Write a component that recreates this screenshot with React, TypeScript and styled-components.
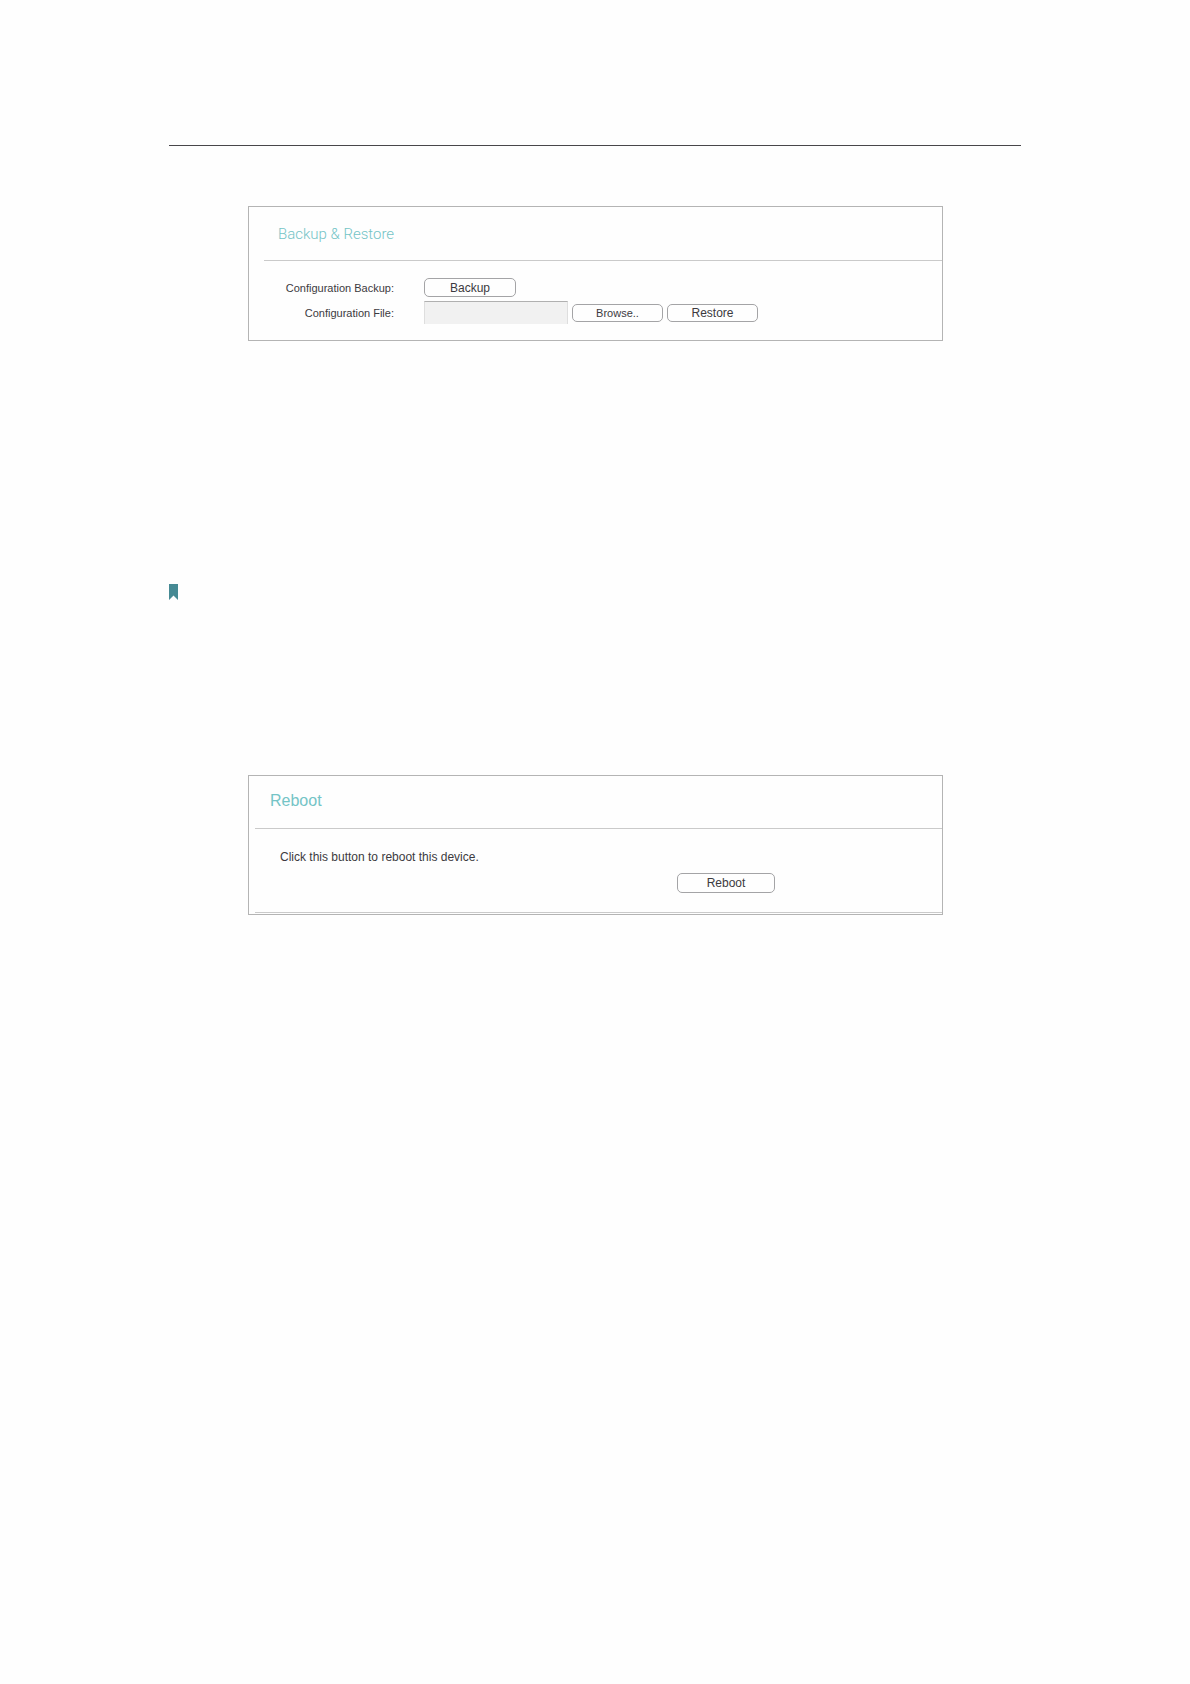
import React from "react";
import styled, { createGlobalStyle } from "styled-components";

const GlobalStyle = createGlobalStyle`
  *, *::before, *::after { box-sizing: border-box; }
  body {
    margin: 0;
    background: #fefefe;
    color: #3c3a40;
    font-family: "Liberation Sans", Arial, sans-serif;
  }
`;

const Page = styled.main`
  max-width: 1190px;
  margin: 0 auto;
  padding: 145px 169px 0;
`;

const TopRule = styled.hr`
  margin: 0 0 60px;
  border: 0;
  border-top: 1px solid #48464a;
`;

const Panel = styled.section<{ $inset: number }>`
  margin: 0 78px 0 79px;
  padding-left: ${({ $inset }) => $inset}px;
  border: 1px solid #b4b4b4;
`;

const PanelTitle = styled.h2<{ $indent: number; $height: number; $narrow?: boolean }>`
  margin: 0;
  padding-left: ${({ $indent }) => $indent}px;
  height: ${({ $height }) => $height}px;
  border-bottom: 1px solid #cacaca;
  color: #74c4c6;
  font-family: ${({ $narrow }) => ($narrow ? 'Roboto, "Liberation Sans"' : '"Liberation Sans"')}, sans-serif;
  font-size: ${({ $narrow }) => ($narrow ? 15 : 16)}px;
  font-weight: ${({ $narrow }) => ($narrow ? 300 : 400)};
  line-height: ${({ $narrow }) => ($narrow ? 54 : 50)}px;
`;

const Form = styled.form`
  display: grid;
  grid-template-columns: 130px 1fr;
  column-gap: 30px;
  row-gap: 4px;
  padding: 17px 0 16px;
`;

const FieldLabel = styled.label`
  align-self: center;
  text-align: right;
  font-size: 11px;
  line-height: 16px;
`;

const Controls = styled.div`
  display: flex;
  align-items: center;
  gap: 4px;
`;

const Button = styled.button<{ $width: number; $height: number; $size?: number }>`
  width: ${({ $width }) => $width}px;
  height: ${({ $height }) => $height}px;
  padding: 0;
  border: 1px solid #a4a4a6;
  border-radius: 5px;
  background: #fefefe;
  color: inherit;
  font-family: inherit;
  font-size: ${({ $size = 12 }) => $size}px;
  line-height: 16px;
`;

const FileInput = styled.input`
  width: 144px;
  height: 23px;
  padding: 0 4px;
  border: 0;
  border-top: 1px solid #b0b0b0;
  border-left: 1px solid #dedede;
  border-right: 1px solid #dedede;
  border-radius: 0;
  background: #f1f1f1;
  font: inherit;
`;

const BookmarkRow = styled.div`
  display: flex;
  padding: 243px 0 175px;
`;

const RebootBody = styled.div`
  display: flex;
  flex-direction: column;
  padding-top: 20px;
`;

const Message = styled.p`
  margin: 0;
  padding-left: 25px;
  font-size: 12px;
  line-height: 16px;
`;

const RebootAction = styled.div`
  display: flex;
  justify-content: flex-end;
  padding: 8px 167px 19px 0;
`;

const BottomRule = styled.hr`
  width: 100%;
  margin: 0 0 1px;
  border: 0;
  border-top: 1px solid #cacaca;
`;

export default function App() {
  return (
    <>
      <GlobalStyle />
      <Page>
        <TopRule />
        <Panel $inset={15}>
          <PanelTitle $indent={14} $height={54} $narrow>
            Backup &amp; Restore
          </PanelTitle>
          <Form onSubmit={(event) => event.preventDefault()}>
            <FieldLabel htmlFor="backup">Configuration Backup:</FieldLabel>
            <Controls>
              <Button id="backup" type="button" $width={92} $height={19}>
                Backup
              </Button>
            </Controls>
            <FieldLabel htmlFor="config-file">Configuration File:</FieldLabel>
            <Controls>
              <FileInput id="config-file" type="text" readOnly />
              <Button type="button" $width={91} $height={18} $size={11}>
                Browse..
              </Button>
              <Button type="submit" $width={91} $height={18}>
                Restore
              </Button>
            </Controls>
          </Form>
        </Panel>
        <BookmarkRow>
          <svg width="9" height="16" viewBox="0 0 9 16" aria-hidden="true">
            <path d="M0 0H9V16L4.5 11.5L0 16Z" fill="#468a94" />
          </svg>
        </BookmarkRow>
        <Panel $inset={6}>
          <PanelTitle $indent={15} $height={53}>
            Reboot
          </PanelTitle>
          <RebootBody>
            <Message>Click this button to reboot this device.</Message>
            <RebootAction>
              <Button type="button" $width={98} $height={20}>
                Reboot
              </Button>
            </RebootAction>
            <BottomRule />
          </RebootBody>
        </Panel>
      </Page>
    </>
  );
}
